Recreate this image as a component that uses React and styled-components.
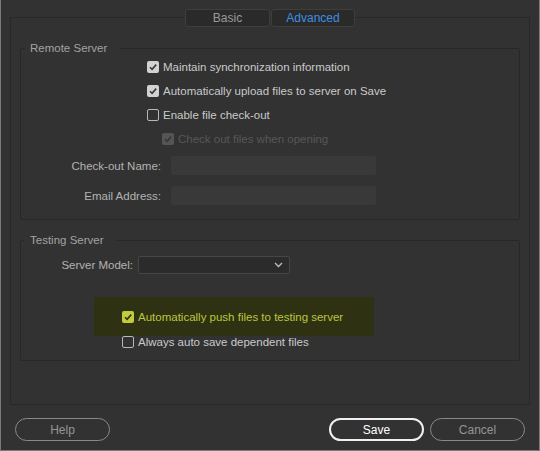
import React from 'react';
import styled, { createGlobalStyle } from 'styled-components';

const GlobalStyle = createGlobalStyle`
  html, body {
    margin: 0;
    padding: 0;
    background: #323232;
  }
  * {
    box-sizing: border-box;
  }
`;

const Window = styled.div`
  display: flex;
  flex-direction: column;
  width: 540px;
  height: 451px;
  padding: 17px 9px 0 9px;
  background: #323232;
  border: 1px solid #7a7a7a;
  border-top: none;
  font-family: "Liberation Sans", Arial, sans-serif;
  font-size: 11.5px;
  color: #c8c8c8;
`;

const Panel = styled.div`
  display: flex;
  flex-direction: column;
  height: 388px;
  padding: 0 9px;
  border: 1px solid #282828;
`;

const TabBar = styled.div`
  display: flex;
  justify-content: center;
  margin-top: -9px;
`;

const Tab = styled.div`
  display: flex;
  align-items: center;
  justify-content: center;
  width: ${p => p.$width}px;
  height: 18px;
  margin-left: ${p => (p.$first ? 0 : 1)}px;
  background: #2a2a2a;
  border: 1px solid #3e3e3e;
  border-radius: 3px;
  font-size: 12px;
  color: ${p => (p.$active ? '#3d8fe2' : '#9a9a9a')};
`;

const Group = styled.fieldset`
  margin: ${p => p.$top}px 0 0 0;
  padding: 0 0 ${p => p.$bottom}px 0;
  border: 1px solid #282828;
  border-radius: 2px;
  min-width: 0;
`;

const Legend = styled.legend`
  margin-left: 4px;
  padding: 0 12px 0 5px;
  height: 14px;
  line-height: 14px;
  font-size: 11.5px;
  color: #a2a2a2;
`;

const CheckRow = styled.label`
  display: flex;
  align-items: center;
  height: ${p => p.$height || 24}px;
  padding-left: ${p => p.$indent}px;
  gap: 4px;
  color: ${p => (p.$disabled ? '#575757' : p.$tint || '#cacaca')};
`;

const Box = styled.span`
  display: flex;
  align-items: center;
  justify-content: center;
  width: 12px;
  height: 12px;
  flex: none;
  border-radius: 2px;
  background: ${p => (p.$checked ? p.$fill : 'transparent')};
  border: ${p => (p.$checked ? 'none' : '1px solid #b8b8b8')};
`;

const FieldGrid = styled.div`
  display: grid;
  grid-template-columns: 140px 205px;
  column-gap: 10px;
  row-gap: 11px;
  align-items: center;
  margin-top: 5px;
`;

const FieldLabel = styled.div`
  text-align: right;
  color: #b2b2b2;
`;

const TextField = styled.div`
  height: 19px;
  background: #393939;
  border-radius: 2px;
`;

const ModelRow = styled.div`
  display: flex;
  align-items: center;
  gap: 5px;
  margin-top: 9px;
`;

const ModelLabel = styled.div`
  width: 112px;
  text-align: right;
  color: #b2b2b2;
`;

const Select = styled.div`
  display: flex;
  align-items: center;
  justify-content: flex-end;
  width: 152px;
  height: 18px;
  padding-right: 6px;
  background: #2b2b2b;
  border: 1px solid #464646;
  border-radius: 2px;
`;

const Highlight = styled.div`
  width: 280px;
  height: 39px;
  margin: 23px 0 0 73px;
  padding-left: 28px;
  display: flex;
  align-items: center;
  background: #2e3213;
`;

const Footer = styled.div`
  display: flex;
  gap: 6px;
  margin-top: 13px;
  padding: 0 5px;
`;

const Spacer = styled.div`
  flex: 1;
`;

const Button = styled.div`
  display: flex;
  align-items: center;
  justify-content: center;
  width: 95px;
  height: 23px;
  border-radius: 12px;
  border: ${p => (p.$primary ? '2px solid #f0f0f0' : '1px solid #8a8a8a')};
  color: ${p => (p.$primary ? '#ffffff' : '#959595')};
  font-size: 12px;
`;

const Check = ({ color }) => (
  <svg width="10" height="10" viewBox="0 0 10 10">
    <path d="M2 5.2 L4.1 7.3 L8.2 2.6" fill="none" stroke={color} strokeWidth="1.6" />
  </svg>
);

const Checkbox = ({ checked, fill = '#d2d2d2', mark = '#3a3a3a' }) => (
  <Box $checked={checked} $fill={fill}>
    {checked && <Check color={mark} />}
  </Box>
);

const Chevron = () => (
  <svg width="9" height="6" viewBox="0 0 9 6">
    <path d="M1 1 L4.5 4.5 L8 1" fill="none" stroke="#c0c0c0" strokeWidth="1.3" />
  </svg>
);

export default function App() {
  return (
    <>
      <GlobalStyle />
      <Window>
        <Panel>
          <TabBar>
            <Tab $first $width={85}>Basic</Tab>
            <Tab $active $width={84}>Advanced</Tab>
          </TabBar>

          <Group $top={14} $bottom={14}>
            <Legend>Remote Server</Legend>
            <CheckRow $indent={126}>
              <Checkbox checked />
              Maintain synchronization information
            </CheckRow>
            <CheckRow $indent={126}>
              <Checkbox checked />
              Automatically upload files to server on Save
            </CheckRow>
            <CheckRow $indent={126}>
              <Checkbox />
              Enable file check-out
            </CheckRow>
            <CheckRow $indent={141} $disabled>
              <Checkbox checked fill="#555555" mark="#363636" />
              Check out files when opening
            </CheckRow>
            <FieldGrid>
              <FieldLabel>Check-out Name:</FieldLabel>
              <TextField />
              <FieldLabel>Email Address:</FieldLabel>
              <TextField />
            </FieldGrid>
          </Group>

          <Group $top={13} $bottom={12}>
            <Legend>Testing Server</Legend>
            <ModelRow>
              <ModelLabel>Server Model:</ModelLabel>
              <Select>
                <Chevron />
              </Select>
            </ModelRow>
            <Highlight>
              <CheckRow $indent={0} $tint="#bcc63e">
                <Checkbox checked fill="#c3cb3e" mark="#2e3213" />
                Automatically push files to testing server
              </CheckRow>
            </Highlight>
            <CheckRow $indent={101} $height={12}>
              <Checkbox />
              Always auto save dependent files
            </CheckRow>
          </Group>
        </Panel>

        <Footer>
          <Button>Help</Button>
          <Spacer />
          <Button $primary>Save</Button>
          <Button>Cancel</Button>
        </Footer>
      </Window>
    </>
  );
}
